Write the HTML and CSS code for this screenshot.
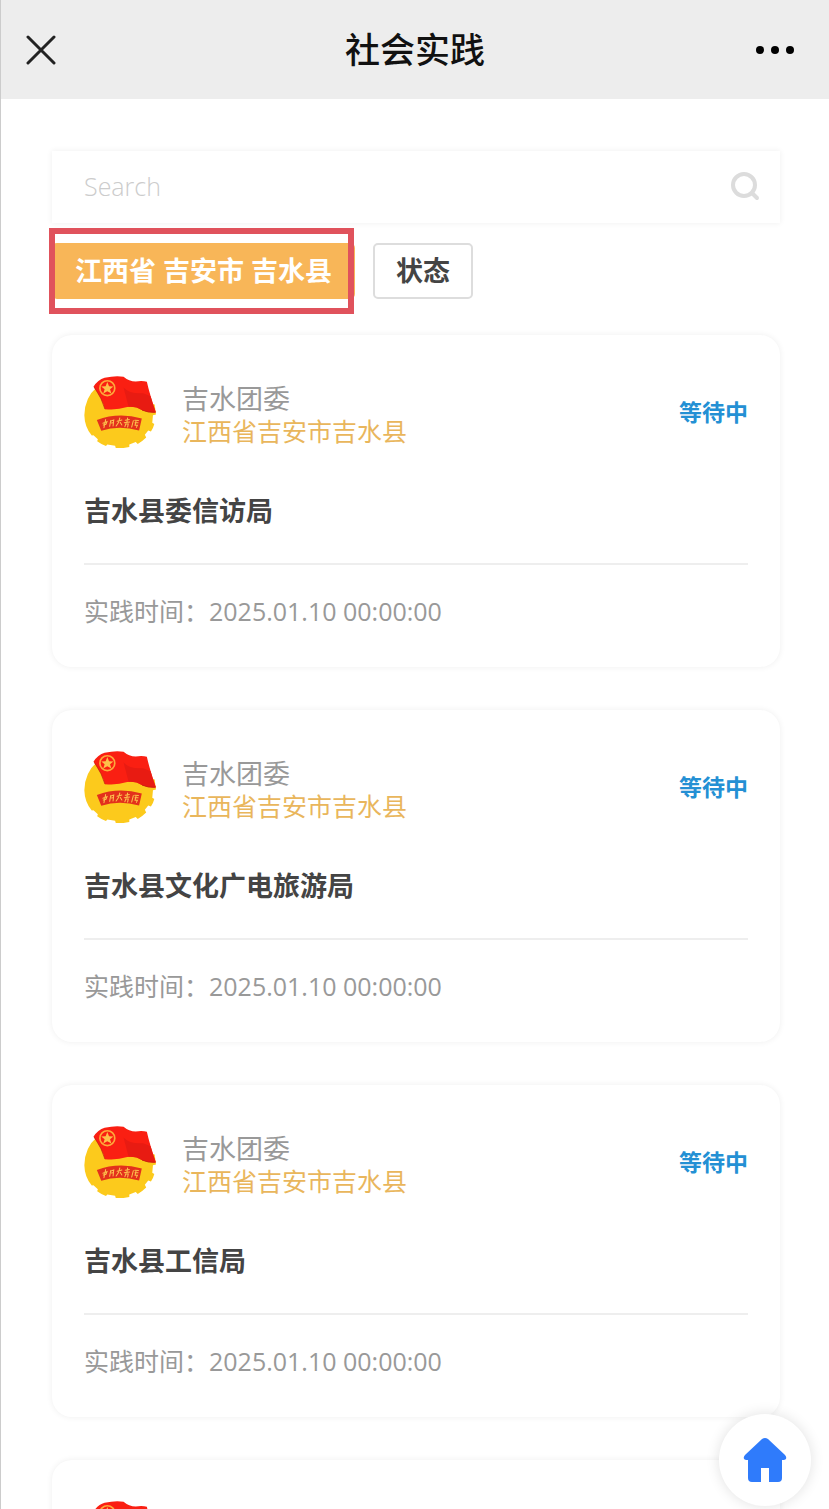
FILE: index.html
```html
<!DOCTYPE html>
<html lang="zh-CN">

<head>
    <meta charset="UTF-8">
    <meta name="viewport" content="width=device-width, initial-scale=1.0">
    <title>社会实践</title>
    <link rel="stylesheet" href="styles.css">
</head>

<body>
<!-- emblem shared by all cards -->
<svg class="defs" aria-hidden="true">
    <symbol id="emblem" viewBox="25 36 213 213">
        <path fill="#fcca1c" d="M64 68 Q27 100 26 152 Q27 188 48 212 L53 211 L66 223 L64 229 Q76 238 90 243 L94 239 L117 242 L119 249 Q139 251 159 246 L159 239 L178 231 L184 237 Q198 229 209 218 L205 210 L215 197 L223 200 Q230 190 233 178 L227 174 L229 152 L238 150 L234 120 Z"/>
        <path fill="#fa1f12" d="M53 68 Q66 46 86 41 Q118 34 142 38 Q158 52 178 52 Q198 49 211 53 Q219 90 238 144 Q216 146 197 137 Q176 124 153 128 Q120 138 87 134 Q79 104 53 68 Z"/>
        <path fill="#e81b12" d="M142 70 Q160 90 200 87 L222 96 Q228 120 237 143 Q215 145 197 137 Q180 125 157 127 Z"/>
        <path fill="none" stroke="#b9240f" stroke-width="2" d="M56 70 Q79 104 87 134 M197 137 Q214 145 236 143"/>
        <circle cx="94" cy="72" r="22" fill="none" stroke="#fda93a" stroke-width="5"/>
        <path fill="#fdc04a" d="M94 54 L99 66 L112 67 L102 75 L106 88 L94 81 L82 88 L86 75 L76 67 L89 66 Z"/>
        <path fill="#e3301c" d="M63 166 Q128 142 196 162 L188 197 Q128 180 76 198 Z"/>
        <g fill="none" stroke="#fdc24e" stroke-width="3" stroke-linecap="round">
            <path d="M81 176 L93 171 L90 179 L82 181 M89 165 L84 189"/>
            <path d="M104 168 L101 185 M105 169 L113 166 L111 184 M106 175 L110 174"/>
            <path d="M123 170 L137 166 M131 160 L127 174 L120 184 M132 173 L137 181"/>
            <path d="M147 167 L159 165 M154 160 L152 173 M144 174 L160 172 M149 177 L146 186 M150 178 L156 178 L154 187"/>
            <path d="M171 168 L166 187 M175 167 L186 168 M176 174 L185 174 M179 169 L176 182 L183 182 L180 188"/>
        </g>
    </symbol>
</svg>

<div class="page">
    <header class="navbar">
        <button class="nav-btn" type="button" aria-label="关闭">
            <svg width="30" height="30" viewBox="0 0 30 30">
                <path d="M2 2L28 28M28 2L2 28" fill="none" stroke="#222" stroke-width="3" stroke-linecap="round"/>
            </svg>
        </button>
        <h1 class="nav-title">社会实践</h1>
        <button class="nav-btn nav-more" type="button" aria-label="更多">
            <svg width="38" height="10" viewBox="0 0 38 10">
                <circle cx="4" cy="5" r="4"/>
                <circle cx="19" cy="5" r="4"/>
                <circle cx="34" cy="5" r="4"/>
            </svg>
        </button>
    </header>

    <main class="content">
        <form class="search">
            <input class="search-input" type="text" placeholder="Search" aria-label="Search">
            <button class="search-btn" type="submit" aria-label="搜索">
                <svg width="30" height="30" viewBox="0 0 30 30" fill="none" stroke="#dcdcdc" stroke-width="4">
                    <circle cx="14" cy="14" r="11"/>
                    <path d="M22 22L27 27" stroke-linecap="round"/>
                </svg>
            </button>
        </form>

        <div class="filters">
            <div class="marked">
                <button class="filter filter-active" type="button">江西省 吉安市 吉水县</button>
            </div>
            <button class="filter" type="button">状态</button>
        </div>

        <div class="list">
            <article class="card">
                <div class="card-head">
                    <svg class="avatar"><use href="#emblem"/></svg>
                    <div class="info">
                        <div class="name">吉水团委</div>
                        <div class="area">江西省吉安市吉水县</div>
                    </div>
                    <span class="status">等待中</span>
                </div>
                <h2 class="card-title">吉水县委信访局</h2>
                <p class="time">实践时间：2025.01.10 00:00:00</p>
            </article>

            <article class="card">
                <div class="card-head">
                    <svg class="avatar"><use href="#emblem"/></svg>
                    <div class="info">
                        <div class="name">吉水团委</div>
                        <div class="area">江西省吉安市吉水县</div>
                    </div>
                    <span class="status">等待中</span>
                </div>
                <h2 class="card-title">吉水县文化广电旅游局</h2>
                <p class="time">实践时间：2025.01.10 00:00:00</p>
            </article>

            <article class="card">
                <div class="card-head">
                    <svg class="avatar"><use href="#emblem"/></svg>
                    <div class="info">
                        <div class="name">吉水团委</div>
                        <div class="area">江西省吉安市吉水县</div>
                    </div>
                    <span class="status">等待中</span>
                </div>
                <h2 class="card-title">吉水县工信局</h2>
                <p class="time">实践时间：2025.01.10 00:00:00</p>
            </article>

            <article class="card">
                <div class="card-head">
                    <svg class="avatar"><use href="#emblem"/></svg>
                </div>
            </article>
        </div>
    </main>

    <a class="home" href="#" aria-label="首页">
        <svg width="44" height="46" viewBox="0 0 44 46">
            <path fill="#2f7bfb" d="M19 2Q22 0 25 2L42 18Q45 22 41 23H39V41Q39 45 35 45H26V31H18V45H9Q5 45 5 41V23H3Q-1 22 2 18Z"/>
        </svg>
    </a>
</div>
</body>

</html>
```

FILE: styles.css
```css
* {
    box-sizing: border-box;
}

body {
    margin: 0;
    background-color: #fff;
    font-family: "Open Sans", "Noto Sans CJK SC", sans-serif;
    color: #444;
}

button {
    font-family: inherit;
    cursor: pointer;
}

.defs {
    display: none;
}

.page {
    display: flex;
    flex-direction: column;
    height: 100vh;
    border-left: 1px solid #ccc;
}

/* top bar */
.navbar {
    display: grid;
    flex-shrink: 0;
    grid-template-columns: 1fr auto 1fr;
    align-items: center;
    padding: 24px 25px;
    background-color: #ededed;
}

.nav-btn {
    display: flex;
    justify-self: start;
    padding: 0;
    border: none;
    background: none;
}

.nav-more {
    justify-self: end;
    margin-right: 10px;
}

.nav-title {
    margin: 0;
    font-size: 35px;
    font-weight: 500;
    line-height: 51px;
    color: #111;
}

.content {
    flex: 1;
    min-height: 0;
    padding: 52px 49px 0 51px;
    overflow-y: auto;
    scrollbar-width: none;
}

/* search */
.search {
    display: flex;
    align-items: center;
    height: 72px;
    padding: 0 20px 3px 32px;
    box-shadow: 0 0 6px rgba(0, 0, 0, 0.07);
}

.search-input {
    flex: 1;
    min-width: 0;
    padding: 0;
    border: none;
    outline: none;
    background: none;
    font-family: inherit;
    font-size: 25px;
    font-weight: 300;
    line-height: 36px;
}

.search-input::placeholder {
    color: #ccc;
}

.search-btn {
    display: flex;
    padding: 0;
    border: none;
    background: none;
}

/* filters */
.filters {
    display: flex;
    gap: 18px;
    margin-top: 20px;
}

.filter {
    height: 56px;
    padding: 0 21px;
    border: 2px solid #ddd;
    border-radius: 5px;
    background-color: #fff;
    font-size: 27px;
    font-weight: bold;
    line-height: 40px;
    color: #444;
    white-space: nowrap;
}

.filter-active {
    border-color: #f8b658;
    background-color: #f8b658;
    color: #fff;
}

.marked {
    position: relative;
}

.marked::after {
    content: "";
    position: absolute;
    top: -15px;
    right: 1px;
    bottom: -15px;
    left: -3px;
    border: 6px solid #e0525c;
    pointer-events: none;
}

/* cards */
.list {
    display: flex;
    flex-direction: column;
    gap: 43px;
    margin-top: 36px;
}

.card {
    padding: 41px 32px 38px;
    border-radius: 20px;
    background-color: #fff;
    box-shadow: 0 0 6px rgba(0, 0, 0, 0.07);
}

.card-head {
    display: flex;
    align-items: center;
}

.avatar {
    width: 72px;
    height: 72px;
    margin-right: 26px;
}

.info {
    flex: 1;
    align-self: flex-end;
    line-height: 33px;
}

.name {
    font-size: 27px;
    color: #999;
}

.area {
    font-size: 25px;
    color: #e9b65c;
}

.status {
    font-size: 23px;
    font-weight: bold;
    line-height: 33px;
    color: #2490d4;
}

.card-title {
    margin: 43px 0 32px;
    font-size: 27px;
    font-weight: bold;
    line-height: 40px;
}

.time {
    margin: 0;
    padding-top: 28px;
    border-top: 2px solid #eee;
    font-size: 25px;
    line-height: 36px;
    color: #999;
}

/* floating home link */
.home {
    position: fixed;
    right: 18px;
    bottom: 3px;
    display: flex;
    align-items: center;
    justify-content: center;
    width: 92px;
    height: 92px;
    border-radius: 50%;
    background-color: #fff;
    box-shadow: 0 0 14px rgba(0, 0, 0, 0.12);
}
```
